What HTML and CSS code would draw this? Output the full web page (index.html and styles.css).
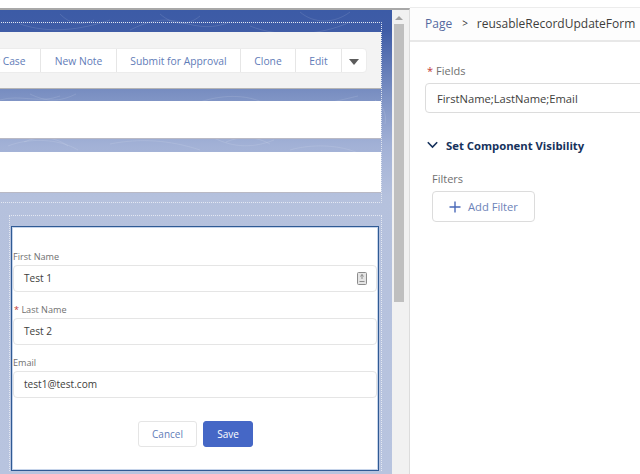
FILE: index.html
```html
<!DOCTYPE html>
<html lang="en">
<head>
  <meta charset="UTF-8">
  <meta name="viewport" content="width=device-width, initial-scale=1.0">
  <title>Lightning App Builder</title>
  <link rel="stylesheet" href="styles.css">
</head>
<body>
  <div class="builder">
    <div class="stage">
      <div class="canvas">
        <svg class="contours" width="392" height="200" viewBox="0 0 392 200" fill="none" stroke="#fff" stroke-opacity="0.11">
          <path d="M20 14c30 10 60 6 90-4M130 20c20-10 34-12 50-8s30 8 50 0M250 16c30 12 70 10 100-4M350 45c18 6 28 16 22 30M375 90c8 6 12 14 10 24"/>
          <path d="M60 4c10 10 20 12 34 6M160 4c14 12 28 12 40 2M300 2c14 12 34 12 50 0M356 60c10 4 14 10 12 18"/>
          <path d="M0 90c20-6 40 4 60-4M200 92c24-8 50-8 70 4M282 92c24 8 50 0 76-6M30 84c16 8 30 8 46 0"/>
          <path d="M8 136c20-8 50-8 70 4M110 134c30-6 60-4 90 6M214 128c20 10 40 10 60 2M290 140c20-6 50-6 70 4"/>
          <path d="M24 132c14-6 30-6 44 4M226 132c14-6 30-6 44 2"/>
        </svg>
        <section class="highlights">
          <div class="band"></div>
          <div class="actions">
            <div class="btn-group">
              <a class="action">New Case</a>
              <a class="action">New Note</a>
              <a class="action">Submit for Approval</a>
              <a class="action">Clone</a>
              <a class="action">Edit</a>
              <a class="action action-more"><span class="caret"></span></a>
            </div>
          </div>
          <div class="band band-b"></div>
          <div class="blank"></div>
          <div class="band band-c"></div>
          <div class="blank blank-tall"></div>
          <div class="band band-d"></div>
        </section>
        <section class="column">
          <div class="band band-e"></div>
          <form class="record-form">
            <label class="field-label">First Name</label>
            <div class="field-input">Test 1
              <svg class="field-icon" width="10" height="13" viewBox="0 0 10 13" fill="none" stroke="#8c8c8c">
                <rect x=".5" y=".5" width="9" height="12" rx="1" fill="#e4e4e4"/>
                <path d="M5 2.500v4.500M3.500 4.500L5 2.500l1.500 2M2.500 9.500h5" stroke-width="1"/>
              </svg>
            </div>
            <label class="field-label"><span class="req">*</span> Last Name</label>
            <div class="field-input">Test 2</div>
            <label class="field-label">Email</label>
            <div class="field-input">test1@test.com</div>
            <div class="form-buttons">
              <button type="button" class="btn-cancel">Cancel</button>
              <button type="button" class="btn-save">Save</button>
            </div>
          </form>
        </section>
      </div>
      <div class="scrollbar">
        <span class="scroll-up"></span>
        <div class="scroll-thumb"></div>
      </div>
    </div>
    <aside class="props">
      <div class="crumbs">
        <a class="crumb-link">Page</a>
        <span class="crumb-sep">&gt;</span>
        <span class="crumb-name">reusableRecordUpdateForm</span>
      </div>
      <div class="props-body">
        <label class="prop-label"><span class="req">*</span>Fields</label>
        <div class="prop-input">FirstName;LastName;Email</div>
        <h3 class="prop-section">
          <svg width="11" height="8" viewBox="0 0 11 8" fill="none" stroke="#16325c" stroke-width="1.6"><path d="M.8 1.300l4.700 4.700 4.700-4.700"/></svg>
          Set Component Visibility
        </h3>
        <div class="filters">
          <label class="prop-label">Filters</label>
          <button type="button" class="btn-filter">
            <svg width="12" height="12" viewBox="0 0 12 12" fill="none" stroke="#4a69b8" stroke-width="1.4"><path d="M6 .5v11M.5 6h11"/></svg>
            Add Filter
          </button>
        </div>
      </div>
    </aside>
  </div>
</body>
</html>
```

FILE: styles.css
```css
* {
  box-sizing: border-box;
}

body {
  margin: 0;
  background: #fff;
  font-family: "Open Sans", "Noto Sans", Arial, sans-serif;
  font-size: 11px;
  color: #3e3e3c;
  overflow: hidden;
}

.builder {
  display: flex;
  width: 640px;
  height: 474px;
  overflow: hidden;
}

/* left side */
.stage {
  display: flex;
  flex: 0 0 410px;
  margin-top: 8px;
  border-top: 2px solid #a8a8a8;
  border-right: 1px solid #dcdcdc;
}

.canvas {
  position: relative;
  width: 392px;
  padding: 12px 10px 0 0;
  background: linear-gradient(to bottom, #3c5ba6 0, #3f5ca6 20px, #7c91c3 85px, #a2b1d6 135px, #b5c1dd 187px, #b8c4df 100%);
  overflow: hidden;
}

.contours {
  position: absolute;
  top: 0;
  left: 0;
}

.scrollbar {
  flex: 1;
  background: #f1f1f1;
  padding: 0 5px 0 2px;
}

.scroll-up {
  display: block;
  width: 0;
  margin: 6px auto 4px;
  border-left: 4px solid transparent;
  border-right: 4px solid transparent;
  border-bottom: 4px solid #a3a3a3;
}

.scroll-thumb {
  height: 278px;
  background: #bfbfbf;
}

.highlights {
  position: relative;
  margin-left: -20px;
  border: 1px dotted #e4e8f2;
  border-right-color: #dfe4f0;
}

.band {
  height: 9px;
}

.band-b {
  height: 13px;
  border-top: 1px solid #b5b5b5;
}

.band-c {
  height: 14px;
  border-top: 1px solid #b9b9c4;
}

.band-d {
  height: 10px;
  border-top: 1px solid #b9b9c4;
}

.band-e {
  height: 10px;
}

.actions {
  display: flex;
  justify-content: flex-end;
  height: 56px;
  padding: 16px 14px 0 0;
  background: #f3f3f3;
}

.btn-group {
  display: flex;
  flex: none;
  height: 25px;
  background: #fff;
  border-radius: 4px;
  border: 1px solid #ececec;
}

.action {
  display: flex;
  align-items: center;
  justify-content: center;
  width: 76px;
  border-left: 1px solid #e6e6e6;
  color: #5f7cb8;
  font-size: 10.3px;
}

.action:first-child {
  border-left: 0;
}

.action:nth-child(3) {
  width: 124px;
}

.action:nth-child(4) {
  width: 55px;
}

.action:nth-child(5) {
  width: 46px;
}

.action-more {
  width: 25px;
}

.caret {
  margin-top: 3px;
  border-left: 5px solid transparent;
  border-right: 5px solid transparent;
  border-top: 6px solid #5c5c5c;
}

.blank {
  height: 37px;
  background: #fff;
}

.blank-tall {
  height: 40px;
}

.column {
  position: relative;
  margin: 12px 0 0 9px;
  border: 1px dotted #e4e8f2;
  border-bottom: 0;
}

.record-form {
  height: 245px;
  margin: 0 2px 0 1px;
  padding: 23px 1px 0;
  background: #fff;
  border: 1px solid #2f5a94;
  box-shadow: inset 0 0 0 1px #c6d4ea;
}

.field-label {
  display: block;
  height: 15px;
  line-height: 14px;
  font-size: 9.1px;
  color: #707070;
}

.req {
  margin-left: 1px;
  color: #c23934;
}

.field-input {
  display: flex;
  align-items: center;
  justify-content: space-between;
  height: 26.5px;
  margin-bottom: 11.5px;
  padding: 0 9px 0 10px;
  border: 1px solid #e5e5e5;
  border-radius: 4px;
  font-size: 10.1px;
  color: #3e3e3c;
}

.form-buttons {
  display: flex;
  justify-content: center;
  gap: 6px;
  margin-top: 23px;
  padding-left: 1px;
}

.form-buttons button {
  height: 26px;
  border-radius: 3px;
  font: inherit;
  font-size: 10px;
}

.btn-cancel {
  width: 59px;
  background: #fff;
  border: 1px solid #e5e5e5;
  color: #5f7cb8;
}

.btn-save {
  width: 50px;
  background: #4567c6;
  border: 1px solid #4567c6;
  color: #fff;
  font-weight: 600;
}

/* right side */
.props {
  flex: 1;
  min-width: 0;
}

.crumbs {
  display: flex;
  align-items: center;
  height: 35px;
  margin-top: 7px;
  padding: 0 0 2px 15px;
  background: #fdfdfd;
  border-top: 1px solid #ececec;
  border-bottom: 2px solid #e8e8e8;
  font-size: 12px;
  white-space: nowrap;
}

.crumb-link {
  color: #55699f;
}

.crumb-sep {
  margin: 0 9px 0 10px;
  font-size: 10px;
  color: #333;
}

.props-body {
  padding: 21px 0 0 15px;
}

.prop-label {
  display: block;
  height: 20px;
  line-height: 16px;
  font-size: 11px;
  color: #707070;
}

.prop-label .req {
  margin: 0 3px 0 2px;
}

.prop-input {
  display: flex;
  align-items: center;
  width: 240px;
  height: 30px;
  padding-left: 11px;
  border: 1px solid #dcdcdc;
  border-radius: 4px;
  font-size: 11.2px;
}

.prop-section {
  display: flex;
  align-items: center;
  gap: 8px;
  margin: 23px 0 0 2px;
  height: 18px;
  font-size: 11.3px;
  font-weight: 700;
  color: #16325c;
}

.filters {
  margin: 17px 0 0 7px;
}

.btn-filter {
  display: flex;
  align-items: center;
  gap: 7px;
  width: 103px;
  height: 31px;
  padding: 0 0 0 16px;
  background: #fff;
  border: 1px solid #dcdcdc;
  border-radius: 4px;
  font: inherit;
  font-size: 11.2px;
  color: #6d83b8;
}
```
